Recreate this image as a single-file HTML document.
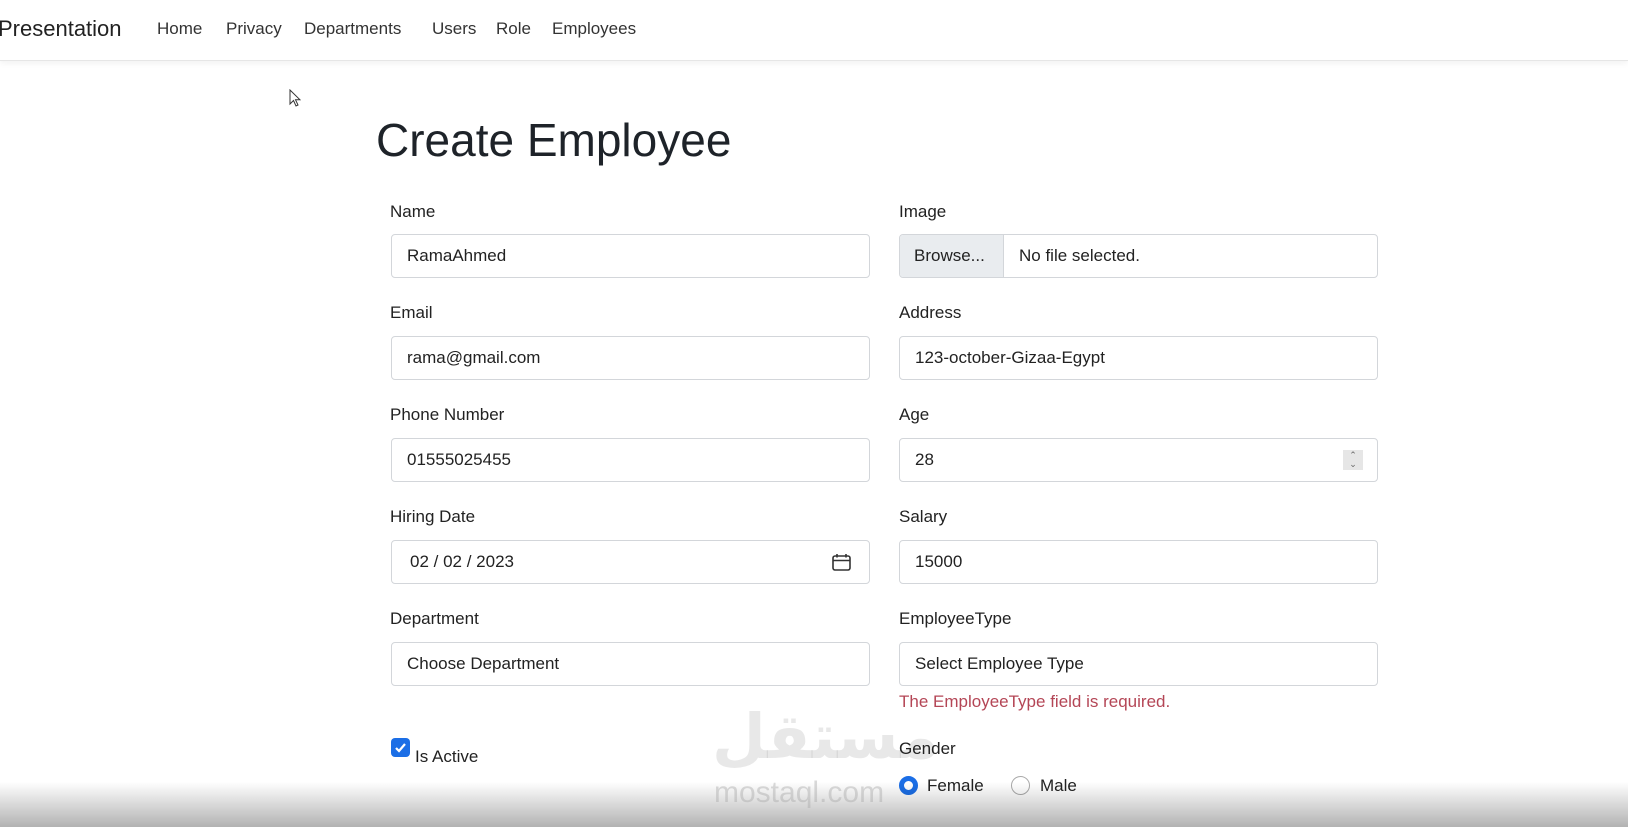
<!DOCTYPE html>
<html><head><meta charset="utf-8"><style>
*{box-sizing:border-box;margin:0;padding:0}
body{width:1628px;height:827px;overflow:hidden;background:#fff;font-family:"Liberation Sans","DejaVu Sans",sans-serif;color:#212529;position:relative}
.nav{position:absolute;left:0;top:0;width:1628px;height:61px;border-bottom:1px solid #e6e6e6;box-shadow:0 2px 6px rgba(0,0,0,.06)}
.brand{position:absolute;left:-2px;top:16px;font-size:22px;color:#222}
.nl{position:absolute;top:19px;font-size:17px;color:#333}
.lbl{position:absolute;font-size:17px;color:#222}
.inp{position:absolute;height:44px;border:1px solid #d3d6da;border-radius:4px;font-size:17px;padding:11px 0 0 15px;color:#222;background:#fff}
.L{left:391px;width:479px}.R{left:899px;width:479px}
h1{position:absolute;left:376px;top:113px;font-size:46px;font-weight:400;color:#1e2329}
.bot{position:absolute;left:0;top:782px;width:1628px;height:45px;background:linear-gradient(rgba(0,0,0,0),rgba(0,0,0,.3))}
</style></head><body>
<div class="nav">
<div class="brand">Presentation</div>
<div class="nl" style="left:157px">Home</div>
<div class="nl" style="left:226px">Privacy</div>
<div class="nl" style="left:304px">Departments</div>
<div class="nl" style="left:432px">Users</div>
<div class="nl" style="left:496px">Role</div>
<div class="nl" style="left:552px">Employees</div>
</div>
<svg style="position:absolute;left:289px;top:89px" width="12" height="19" viewBox="0 0 12 19"><path d="M1 1 L1 15 L4.5 11.5 L7 17 L9 16 L6.5 10.8 L11 10.8 Z" fill="#fff" stroke="#333" stroke-width="1"/></svg>
<h1>Create Employee</h1>

<div class="lbl" style="left:390px;top:202px">Name</div>
<div class="inp L" style="top:234px">RamaAhmed</div>
<div class="lbl" style="left:899px;top:202px">Image</div>
<div class="inp R" style="top:234px;padding:0;overflow:hidden"><span style="position:absolute;left:0;top:0;width:104px;height:42px;background:#e9ecef;border-right:1px solid #d3d6da;padding:11px 0 0 14px">Browse...</span><span style="position:absolute;left:119px;top:11px">No file selected.</span></div>

<div class="lbl" style="left:390px;top:303px">Email</div>
<div class="inp L" style="top:336px">rama@gmail.com</div>
<div class="lbl" style="left:899px;top:303px">Address</div>
<div class="inp R" style="top:336px">123-october-Gizaa-Egypt</div>

<div class="lbl" style="left:390px;top:405px">Phone Number</div>
<div class="inp L" style="top:438px">01555025455</div>
<div class="lbl" style="left:899px;top:405px">Age</div>
<div class="inp R" style="top:438px">28<span style="position:absolute;left:443px;top:11px;width:20px;height:20px;background:#e6e6e6;font-size:9px;line-height:9px;text-align:center;color:#666;padding-top:1px">&#8963;<br>&#8964;</span></div>

<div class="lbl" style="left:390px;top:507px">Hiring Date</div>
<div class="inp L" style="top:540px;padding-left:18px">02 / 02 / 2023
<svg style="position:absolute;left:440px;top:12px" width="19" height="18" viewBox="0 0 19 18"><rect x="1" y="3" width="17" height="14" rx="2" fill="none" stroke="#333" stroke-width="1.6"/><path d="M1 7.5H18M5 1V4.5M14 1V4.5" stroke="#333" stroke-width="1.6"/></svg></div>
<div class="lbl" style="left:899px;top:507px">Salary</div>
<div class="inp R" style="top:540px">15000</div>

<div class="lbl" style="left:390px;top:609px">Department</div>
<div class="inp L" style="top:642px">Choose Department</div>
<div class="lbl" style="left:899px;top:609px">EmployeeType</div>
<div class="inp R" style="top:642px">Select Employee Type</div>
<div class="lbl" style="left:899px;top:692px;color:#b44656">The EmployeeType field is required.</div>

<div style="position:absolute;left:391px;top:738px;width:19px;height:19px;background:#1b6ee6;border-radius:4px"><svg width="19" height="19" viewBox="0 0 19 19"><path d="M5 10l3 3 6-7" fill="none" stroke="#fff" stroke-width="2.2"/></svg></div>
<div class="lbl" style="left:415px;top:747px">Is Active</div>

<div style="position:absolute;left:712px;top:700px;font-size:62px;font-weight:bold;color:rgba(180,180,180,.3);font-family:'DejaVu Sans',sans-serif">مستقل</div>

<div class="lbl" style="left:899px;top:739px">Gender</div>
<div style="position:absolute;left:899px;top:776px;width:19px;height:19px;border-radius:50%;border:5px solid #1b6ee6;background:#fff"></div>
<div class="lbl" style="left:927px;top:776px">Female</div>
<div style="position:absolute;left:1011px;top:776px;width:19px;height:19px;border-radius:50%;border:1px solid #aaa;background:#fff"></div>
<div class="lbl" style="left:1040px;top:776px">Male</div>

<div class="bot"></div>
<div style="position:absolute;left:714px;top:776px;font-size:30px;color:rgba(170,170,170,.45)">mostaql.com</div>
</body></html>
